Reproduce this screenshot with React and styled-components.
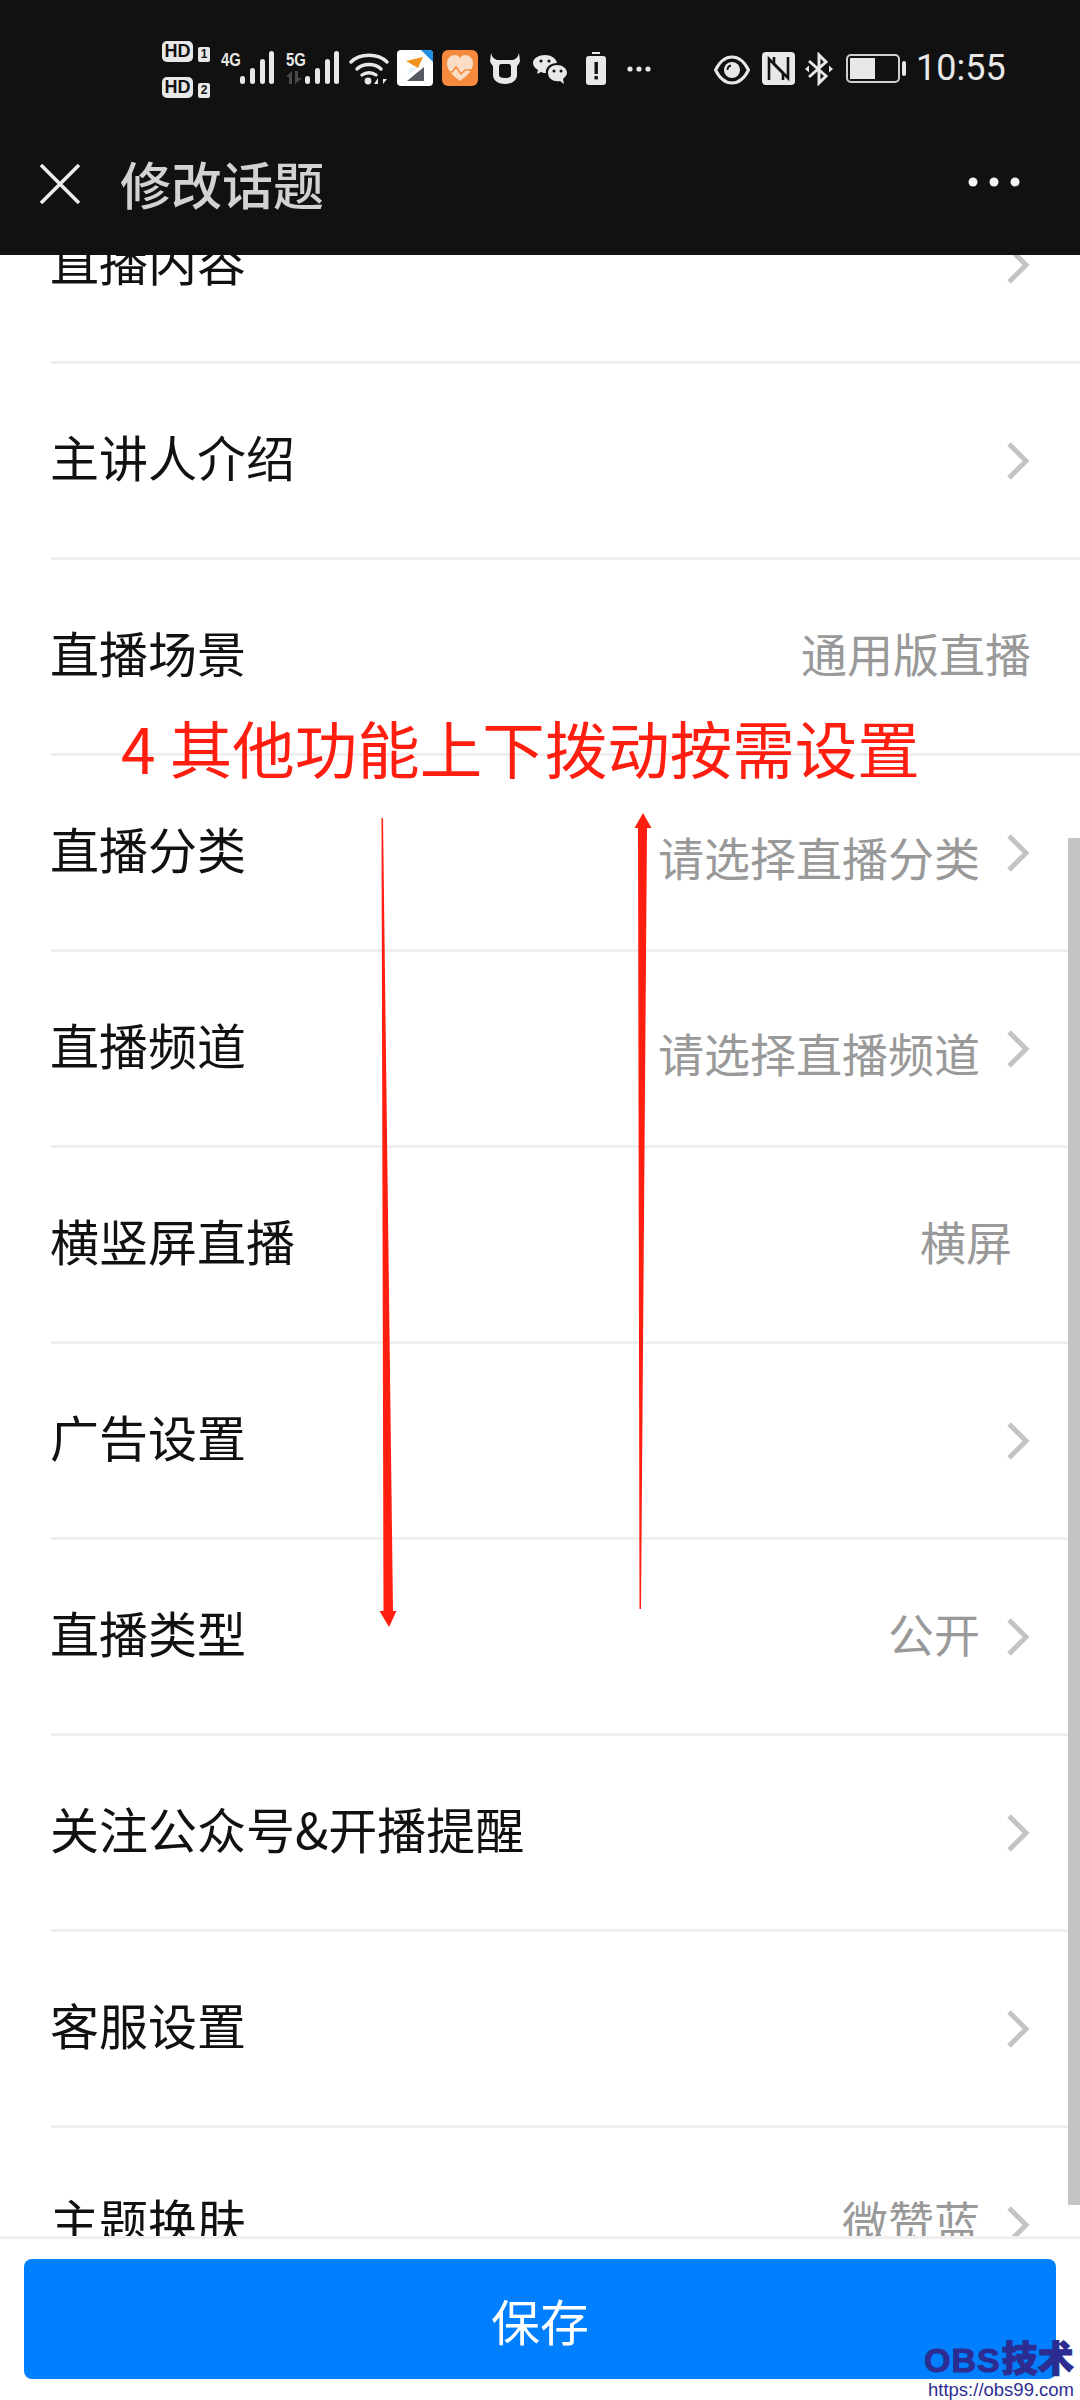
import React from "react";
import styled, { createGlobalStyle } from "styled-components";

const GlobalStyle = createGlobalStyle`
  html, body {
    margin: 0;
    padding: 0;
    background: #fff;
  }
  body {
    font-family: "Noto Sans CJK SC", "Noto Sans", sans-serif;
  }
`;

const Screen = styled.div`
  position: relative;
  width: 1080px;
  height: 2400px;
  display: flex;
  flex-direction: column;
  overflow: hidden;
  background: #fff;
`;

const Header = styled.header`
  flex: 0 0 255px;
  background: #111;
  position: relative;
  z-index: 1;
  display: flex;
  flex-direction: column;
`;

const StatusBar = styled.div`
  height: 136px;
  box-sizing: border-box;
  padding: 40px 0 0 162px;
  display: flex;
  align-items: flex-start;
  color: #e8e8e8;
`;

const HdStack = styled.div`
  width: 48px;
  display: flex;
  flex-direction: column;
  gap: 14px;
`;

const HdLine = styled.div`
  display: flex;
  align-items: flex-end;
  justify-content: space-between;
  height: 22px;
`;

const HdPill = styled.span`
  width: 31px;
  height: 21px;
  border-radius: 5px;
  background: #e8e8e8;
  color: #111;
  font: 700 18px/21px "Liberation Sans", sans-serif;
  text-align: center;
`;

const HdNumber = styled.span`
  width: 12px;
  height: 15px;
  border-radius: 2px;
  background: #e8e8e8;
  color: #111;
  font: 700 12px/15px "Liberation Sans", sans-serif;
  text-align: center;
`;

const Network = styled.div`
  position: relative;
  margin-left: ${(p) => p.$left}px;
  width: 54px;
  height: 44px;
`;

const NetworkLabel = styled.span`
  position: absolute;
  left: 0;
  top: 11px;
  font: 700 19px/17px "Liberation Sans", sans-serif;
  transform: scaleX(0.78);
  transform-origin: left center;
  color: #e8e8e8;
`;

const IconSlot = styled.svg`
  flex: none;
  display: block;
  margin-left: ${(p) => p.$left || 0}px;
  margin-top: ${(p) => p.$top || 0}px;
`;

const Clock = styled.span`
  margin-left: 10px;
  margin-top: 7px;
  font: 400 36px/42px Roboto, sans-serif;
  color: #e8e8e8;
`;

const NavBar = styled.div`
  flex: 1;
  display: flex;
  align-items: flex-start;
  padding-left: 39px;
`;

const NavTitle = styled.h1`
  margin: 12px 0 0 39px;
  font-size: 51px;
  line-height: 70px;
  font-weight: 500;
  color: #d2d2d2;
`;

const NavMore = styled.svg`
  margin: 41px 58px 0 auto;
`;

const Body = styled.main`
  flex: 1;
  min-height: 0;
  overflow: hidden;
`;

const RowList = styled.ul`
  list-style: none;
  margin: -87px 0 0;
  padding: 0;
`;

const Row = styled.li`
  height: 196px;
  box-sizing: border-box;
  margin-left: 51px;
  padding-right: 49px;
  border-bottom: 3px solid #efefef;
  display: flex;
  align-items: center;
  justify-content: space-between;
`;

const Label = styled.span`
  margin-left: -1px;
  font-size: 49px;
  line-height: 70px;
  color: #111;
  padding-bottom: 10px;
`;

const RowEnd = styled.div`
  display: flex;
  align-items: center;
`;

const Value = styled.span`
  font-size: 46px;
  line-height: 70px;
  color: #999;
  padding-top: ${(p) => (p.$placeholder ? 6 : 0)}px;
  padding-bottom: ${(p) => (p.$placeholder ? 0 : 10)}px;
  padding-right: ${(p) => (p.$inset ? 19 : 0)}px;
`;

const Chevron = styled.svg`
  display: block;
  margin-left: 25px;
`;

const Footer = styled.footer`
  flex: 0 0 164px;
  box-sizing: border-box;
  border-top: 3px solid #efefef;
  background: #fff;
  padding: 20px 24px 21px;
  display: flex;
`;

const SaveButton = styled.button`
  flex: 1;
  border: 0;
  border-radius: 8px;
  background: #0080ff;
  color: #fff;
  font-family: inherit;
  font-size: 49px;
  padding: 0;
`;

const Scrollbar = styled.div`
  position: absolute;
  top: 838px;
  right: 0;
  width: 12px;
  height: 1367px;
  background: #c4c4c4;
`;

const Annotation = styled.div`
  position: absolute;
  left: 121px;
  top: 702px;
  font-size: 62.5px;
  line-height: 90px;
  color: #ff1e10;
  white-space: nowrap;
`;

const ArrowLayer = styled.svg`
  position: absolute;
  left: 0;
  top: 0;
  pointer-events: none;
`;

const Watermark = styled.div`
  position: absolute;
  left: 924px;
  top: 2336px;
  width: 156px;
  color: #2d2d91;
`;

const WatermarkName = styled.div`
  font-size: 36px;
  line-height: 40px;
  font-weight: 900;
  white-space: nowrap;
  -webkit-text-stroke: 1px #2d2d91;
`;

const WatermarkLatin = styled.span`
  font-family: "Liberation Sans", sans-serif;
  font-weight: 700;
  font-size: 34px;
  letter-spacing: 1px;
  margin-right: 1px;
`;

const WatermarkUrl = styled.div`
  margin: 0 0 0 4px;
  font: 400 18.5px/19px "Liberation Sans", sans-serif;
  white-space: nowrap;
`;

const rows = [
  { label: "直播内容", chevron: true },
  { label: "主讲人介绍", chevron: true },
  { label: "直播场景", value: "通用版直播" },
  { label: "直播分类", value: "请选择直播分类", placeholder: true, chevron: true },
  { label: "直播频道", value: "请选择直播频道", placeholder: true, chevron: true },
  { label: "横竖屏直播", value: "横屏", inset: true },
  { label: "广告设置", chevron: true },
  { label: "直播类型", value: "公开", chevron: true },
  { label: "关注公众号&开播提醒", chevron: true },
  { label: "客服设置", chevron: true },
  { label: "主题换肤", value: "微赞蓝", chevron: true },
];

const ink = "#e8e8e8";

const SignalBars = () => (
  <IconSlot width="35" height="33" viewBox="0 0 35 33" style={{ position: "absolute", left: 19, top: 11 }}>
    <rect x="0" y="25" width="5" height="8" rx="2.5" fill={ink} />
    <rect x="10" y="17" width="5" height="16" rx="2.5" fill={ink} />
    <rect x="20" y="8" width="5" height="25" rx="2.5" fill={ink} />
    <rect x="29" y="0" width="5" height="33" rx="2.5" fill={ink} />
  </IconSlot>
);

const Wifi = () => (
  <IconSlot $left={9} $top={12} width="40" height="33" viewBox="0 0 40 33">
    <g fill="none" stroke={ink} strokeWidth="3.4" strokeLinecap="round">
      <path d="M2 10C11 1 29 1 38 10" />
      <path d="M8 17C14 11 26 11 32 17" />
      <path d="M13 23C17 20 23 20 27 23" />
    </g>
    <circle cx="19" cy="29" r="3.4" fill={ink} />
    <path d="M29 32V26L25 32ZM34 25V32L38 27H34Z" fill={ink} />
  </IconSlot>
);

const TileApp = () => (
  <IconSlot $left={8} $top={10} width="36" height="36" viewBox="0 0 36 36">
    <rect width="36" height="36" rx="4" fill="#fff" />
    <path d="M24 0H32A4 4 0 0 1 36 4V12Z" fill="#1c8fe0" />
    <path d="M9 11L26 7L21 18Z" fill="#f0921e" />
    <path d="M13 18L21 18L10 25Z" fill="#e4eef6" />
    <path d="M10 31L27 17L27 31Z" fill="#565a60" />
  </IconSlot>
);

const HeartApp = () => (
  <IconSlot $left={9} $top={10} width="36" height="36" viewBox="0 0 36 36">
    <rect width="36" height="36" rx="6" fill="#f58a3c" />
    <path d="M18 31C10 25 5 20 5 13C5 8 9 5 13 5C15 5 17 6 18 8C19 6 21 5 23 5C27 5 31 8 31 13C31 20 26 25 18 31Z" fill="#fbdcc4" />
    <path d="M1 22H10L14 17L19 24L23 20H35" fill="none" stroke="#f58a3c" strokeWidth="1.6" />
  </IconSlot>
);

const Cow = () => (
  <IconSlot $left={12} $top={13} width="30" height="31" viewBox="0 0 30 31">
    <path d="M1 0C2 4 4 6 7 7H23C26 6 28 4 29 0L30 8C29 11 28 12 27 13V22C27 28 21 31 15 31C9 31 3 28 3 22V13C2 12 1 11 0 8Z" fill={ink} />
    <path d="M11 11H19C20 11 21 12 21 14V22C21 24 19 25 15 25C11 25 9 24 9 22V14C9 12 10 11 11 11Z" fill="#111" />
  </IconSlot>
);

const Wechat = () => (
  <IconSlot $left={13} $top={15} width="34" height="29" viewBox="0 0 34 29">
    <path d="M12 0C18 0 23 3 24 8C18 8 12 12 13 18C11 18 10 18 8 17L4 19L5 15C2 13 0 11 0 8C0 3 6 0 12 0Z" fill={ink} />
    <path d="M24 10C29 10 34 13 34 18C34 20 32 22 30 24L31 29L27 26C21 27 15 24 15 18C15 13 19 10 24 10Z" fill={ink} />
    <circle cx="8" cy="6" r="1.6" fill="#111" />
    <circle cx="16" cy="6" r="1.6" fill="#111" />
    <circle cx="21" cy="16" r="1.5" fill="#111" />
    <circle cx="28" cy="16" r="1.5" fill="#111" />
  </IconSlot>
);

const AlertBattery = () => (
  <IconSlot $left={19} $top={12} width="20" height="33" viewBox="0 0 20 33">
    <rect x="6" y="0" width="8" height="2" fill={ink} />
    <rect x="0" y="4" width="20" height="29" rx="3" fill={ink} />
    <rect x="8.5" y="10" width="3.4" height="12" fill="#111" />
    <rect x="8.5" y="24" width="3.4" height="3.4" fill="#111" />
  </IconSlot>
);

const MoreDots = () => (
  <IconSlot $left={21} $top={26} width="24" height="6" viewBox="0 0 24 6">
    <circle cx="3" cy="3" r="2.6" fill={ink} />
    <circle cx="12" cy="3" r="2.6" fill={ink} />
    <circle cx="21" cy="3" r="2.6" fill={ink} />
  </IconSlot>
);

const Eye = () => (
  <IconSlot $left={63} $top={15} width="36" height="30" viewBox="0 0 36 30">
    <path d="M1.5 15C6 6 12 2 18 2C24 2 30 6 34.5 15C30 24 24 28 18 28C12 28 6 24 1.5 15Z" fill="none" stroke={ink} strokeWidth="3" />
    <circle cx="18" cy="15" r="8" fill={ink} />
    <path d="M13.5 15A4.5 4.5 0 0 1 17 10.5" fill="none" stroke="#111" strokeWidth="1.8" />
  </IconSlot>
);

const Nfc = () => (
  <IconSlot $left={12} $top={12} width="33" height="33" viewBox="0 0 33 33">
    <rect width="33" height="33" rx="4" fill={ink} />
    <path d="M7 28V7L21 21V28" fill="none" stroke="#111" strokeWidth="2.6" />
    <path d="M26 5V26L12 12V5" fill="none" stroke="#111" strokeWidth="2.6" />
  </IconSlot>
);

const Bluetooth = () => (
  <IconSlot $left={10} $top={12} width="28" height="34" viewBox="0 0 28 34">
    <path d="M4 9L21 24L14 31V3L21 10L4 25" fill="none" stroke={ink} strokeWidth="3" />
    <path d="M0 17L4 13.5V20.5ZM28 17L24 13.5V20.5Z" fill={ink} />
  </IconSlot>
);

const Battery = () => (
  <IconSlot $left={13} $top={14} width="60" height="29" viewBox="0 0 60 29">
    <rect x="1" y="1" width="52" height="27" rx="4" fill="none" stroke="#cfcfcf" strokeWidth="2" />
    <rect x="4" y="4" width="25" height="21" fill={ink} />
    <rect x="56" y="7" width="4" height="15" rx="2" fill={ink} />
  </IconSlot>
);

const App = () => {
  return (
    <Screen>
      <GlobalStyle />
      <Header>
        <StatusBar>
          <HdStack>
            <HdLine>
              <HdPill>HD</HdPill>
              <HdNumber>1</HdNumber>
            </HdLine>
            <HdLine>
              <HdPill>HD</HdPill>
              <HdNumber>2</HdNumber>
            </HdLine>
          </HdStack>
          <Network $left={11}>
            <NetworkLabel>4G</NetworkLabel>
            <SignalBars />
          </Network>
          <Network $left={11}>
            <NetworkLabel>5G</NetworkLabel>
            <IconSlot width="16" height="13" viewBox="0 0 16 13" style={{ position: "absolute", left: 0, top: 31 }}>
              <path d="M6 0V13H3V6H0ZM9 0H12V7H16L9 13Z" fill="#4a4a4a" />
            </IconSlot>
            <SignalBars />
          </Network>
          <Wifi />
          <TileApp />
          <HeartApp />
          <Cow />
          <Wechat />
          <AlertBattery />
          <MoreDots />
          <Eye />
          <Nfc />
          <Bluetooth />
          <Battery />
          <Clock>10:55</Clock>
        </StatusBar>
        <NavBar>
          <svg width="42" height="42" viewBox="0 0 42 42" style={{ marginTop: 27 }}>
            <path d="M2 2L40 40M40 2L2 40" stroke="#ececec" strokeWidth="3.6" />
          </svg>
          <NavTitle>修改话题</NavTitle>
          <NavMore width="54" height="10" viewBox="0 0 54 10">
            <circle cx="5" cy="5" r="4.5" fill="#f2f2f2" />
            <circle cx="26" cy="5" r="4.5" fill="#f2f2f2" />
            <circle cx="47" cy="5" r="4.5" fill="#f2f2f2" />
          </NavMore>
        </NavBar>
      </Header>
      <Body>
        <RowList>
          {rows.map((row) => (
            <Row key={row.label}>
              <Label>{row.label}</Label>
              <RowEnd>
                {row.value && (
                  <Value $placeholder={row.placeholder} $inset={row.inset}>
                    {row.value}
                  </Value>
                )}
                {row.chevron && (
                  <Chevron width="26" height="44" viewBox="0 0 26 44">
                    <path d="M4 5L21 22L4 39" fill="none" stroke="#c4c4c4" strokeWidth="5" />
                  </Chevron>
                )}
              </RowEnd>
            </Row>
          ))}
        </RowList>
      </Body>
      <Footer>
        <SaveButton>保存</SaveButton>
      </Footer>
      <Scrollbar />
      <Annotation>4 其他功能上下拨动按需设置</Annotation>
      <ArrowLayer width="1080" height="2400" viewBox="0 0 1080 2400">
        <path d="M381.5 818H383L393 1611H396.5L389 1627L379.5 1611H383.5Z" fill="#ff1e10" />
        <path d="M643 813L651.5 828H647L641 1609H639.5L638 828H634.5Z" fill="#ff1e10" />
      </ArrowLayer>
      <Watermark>
        <WatermarkName>
          <WatermarkLatin>OBS</WatermarkLatin>技术
        </WatermarkName>
        <WatermarkUrl>https://obs99.com</WatermarkUrl>
      </Watermark>
    </Screen>
  );
};

export default App;
